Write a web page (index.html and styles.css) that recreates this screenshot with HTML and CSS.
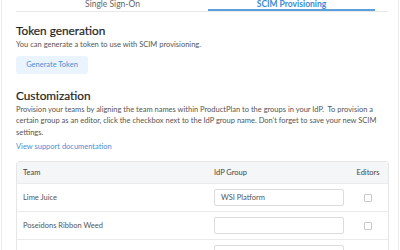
FILE: index.html
```html
<!DOCTYPE html>
<html>
<head>
<meta charset="utf-8">
<link rel="stylesheet" href="styles.css">
</head>
<body>
<div class="frame">
  <div class="tabs">
    <div class="tab">Single Sign-On</div>
    <div class="tab active">SCIM Provisioning</div>
  </div>
  <h2 class="heading first">Token generation</h2>
  <p class="text">You can generate a token to use with SCIM provisioning.</p>
  <button class="btn">Generate Token</button>
  <h2 class="heading">Customization</h2>
  <p class="text para">Provision your teams by aligning the team names within ProductPlan to the groups in your IdP.&nbsp; To provision a certain group as an editor, click the checkbox next to the IdP group name. Don’t forget to save your new SCIM settings.</p>
  <a class="link" href="#">View support documentation</a>
  <div class="table">
    <div class="row head">
      <div class="c-team">Team</div>
      <div class="c-group">IdP Group</div>
      <div class="c-ed">Editors</div>
    </div>
    <div class="row">
      <div class="c-team">Lime Juice</div>
      <div class="c-group"><div class="input">WSI Platform</div></div>
      <div class="c-ed"><span class="check"></span></div>
    </div>
    <div class="row">
      <div class="c-team">Poseidons Ribbon Weed</div>
      <div class="c-group"><div class="input"></div></div>
      <div class="c-ed"><span class="check"></span></div>
    </div>
    <div class="row">
      <div class="c-team">Marketing</div>
      <div class="c-group"><div class="input"></div></div>
      <div class="c-ed"><span class="check"></span></div>
    </div>
  </div>
</div>
</body>
</html>
```
FILE: styles.css
```css
html, body {
  margin: 0;
  padding: 0;
  background: #fff;
  overflow: hidden;
}
body {
  font-family: Lato, "Noto Sans", sans-serif;
  color: #555;
  width: 400px;
  height: 250px;
}
.frame {
  margin: 0 1px;
  border-left: 1px solid #ececec;
  border-right: 1px solid #ececec;
  padding: 0 10px 0 14px;
  height: 250px;
  box-sizing: border-box;
  overflow: hidden;
}
.tabs {
  display: flex;
  border-bottom: 1px solid #e8e8e8;
  padding-left: 13px;
  gap: 12px;
  height: 13px;
  margin-top: -1px;
  width: 372px;
  box-sizing: border-box;
}
.tab {
  width: 167px;
  text-align: center;
  font-size: 8.5px;
  color: #666;
  line-height: 10px;
}
.tab.active {
  color: #3c8ad6;
  font-weight: 700;
  border-bottom: 2px solid #5b9fdc;
  height: 12px;
  box-sizing: border-box;
}
.heading {
  margin: 0;
  font-family: Lato, sans-serif;
  font-size: 11.8px;
  font-weight: 400;
  color: #1f1f1f;
  line-height: 15px;
  -webkit-text-stroke: 0.2px #1f1f1f;
}
.heading.first {
  margin-top: 11px;
}
.text {
  margin: 1px 0 0;
  font-size: 7.5px;
  line-height: 11.5px;
  color: #555;
}
.btn {
  display: block;
  margin: 5px 0 0;
  border: none;
  background: #eaf4fe;
  color: #4a8fd2;
  font-family: inherit;
  font-size: 7.5px;
  width: 72px;
  height: 18px;
  border-radius: 3px;
  padding: 0;
}
.heading + .para {
  margin-top: 1px;
}
.btn + .heading {
  margin-top: 14px;
}
.link {
  display: block;
  margin-top: 3px;
  font-size: 7.5px;
  line-height: 11px;
  color: #4a90d6;
  text-decoration: none;
}
.table {
  margin-top: 9px;
  width: 371px;
  border: 1px solid #e6e6e6;
  border-radius: 3px;
  font-size: 7.5px;
}
.row {
  display: flex;
  align-items: center;
  height: 27px;
  border-top: 1px solid #ebebeb;
}
.row.head {
  border-top: none;
  height: 21px;
  background: #f5f6f7;
  color: #444;
}
.c-team {
  width: 190px;
  padding-left: 6px;
  box-sizing: border-box;
}
.c-group {
  width: 141px;
  padding-left: 7px;
  box-sizing: border-box;
}
.c-ed {
  flex: 1;
  text-align: center;
  display: flex;
  justify-content: center;
}
.input {
  width: 130px;
  height: 17px;
  border: 1px solid #dcdcdc;
  border-radius: 2px;
  box-sizing: border-box;
  padding-left: 6px;
  line-height: 15px;
  color: #555;
}
.check {
  display: block;
  width: 6px;
  height: 6px;
  border: 1px solid #c8c8c8;
  border-radius: 1px;
}
```
